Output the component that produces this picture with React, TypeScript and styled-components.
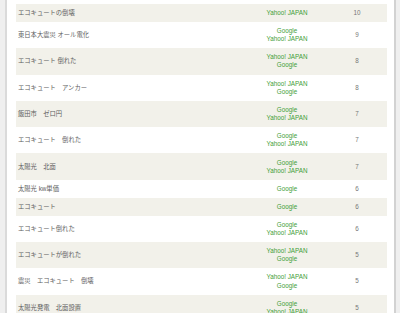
import React from "react";
import styled, { createGlobalStyle } from "styled-components";

const Global = createGlobalStyle`
  html, body { margin: 0; padding: 0; background: #fff; }
  body { overflow: hidden; }
`;

const Page = styled.div`
  display: flex;
  height: 313px;
  overflow: hidden;
  background-color: #fff;
  background-image: radial-gradient(#dcdcdc 0.6px, transparent 0.8px);
  background-size: 2px 2px;
  padding: 0 4px 0 5px;
  box-sizing: border-box;
`;

const Frame = styled.div`
  flex: 1;
  background: #fff;
  border-left: 2px solid #dadada;
  border-right: 2px solid #d2d2d2;
  padding: 4px 7px 0 9px;
  box-sizing: border-box;
`;

const Table = styled.table`
  width: 371px;
  border-collapse: collapse;
  table-layout: fixed;
  font-family: "Liberation Sans", "Noto Sans CJK JP", sans-serif;
  font-size: 6.3px;
  line-height: 8.1px;
`;

const Row = styled.tr<{ $shaded: boolean; $lines: number }>`
  background: ${(p) => (p.$shaded ? "#f2f1ea" : "#ffffff")};
  height: ${(p) => (p.$lines > 1 ? "26.3px" : "18px")};
`;

const KeywordCell = styled.td`
  width: 229px;
  padding: 0 0 0 2px;
  color: #606060;
  vertical-align: middle;
  white-space: pre;
`;

const EngineCell = styled.td`
  width: 80px;
  padding: 0;
  color: #3f9e38;
  text-align: center;
  vertical-align: middle;
`;

const CountCell = styled.td`
  padding: 0;
  color: #777;
  text-align: center;
  vertical-align: middle;
`;

const EngineLine = styled.div`
  display: block;
`;

type Item = { kw: string; engines: string[]; n: number };

const Y = "Yahoo! JAPAN";
const G = "Google";

const data: Item[] = [
  { kw: "エコキュートの倒壊", engines: [Y], n: 10 },
  { kw: "東日本大震災 オール電化", engines: [G, Y], n: 9 },
  { kw: "エコキュート 倒れた", engines: [Y, G], n: 8 },
  { kw: "エコキュート　アンカー", engines: [Y, G], n: 8 },
  { kw: "飯田市　ゼロ円", engines: [G, Y], n: 7 },
  { kw: "エコキュート　倒れた", engines: [G, Y], n: 7 },
  { kw: "太陽光　北面", engines: [G, Y], n: 7 },
  { kw: "太陽光 kw単価", engines: [G], n: 6 },
  { kw: "エコキュート", engines: [G], n: 6 },
  { kw: "エコキュート倒れた", engines: [G, Y], n: 6 },
  { kw: "エコキュートが倒れた", engines: [Y, G], n: 5 },
  { kw: "震災　エコキュート　倒壊", engines: [Y, G], n: 5 },
  { kw: "太陽光発電　北面設置", engines: [G, Y], n: 5 },
];

export default function App() {
  return (
    <>
      <Global />
      <Page>
        <Frame>
          <Table>
            <tbody>
              {data.map((d, i) => (
                <Row key={i} $shaded={i % 2 === 0} $lines={d.engines.length}>
                  <KeywordCell>{d.kw}</KeywordCell>
                  <EngineCell>
                    {d.engines.map((e, j) => (
                      <EngineLine key={j}>{e}</EngineLine>
                    ))}
                  </EngineCell>
                  <CountCell>{d.n}</CountCell>
                </Row>
              ))}
            </tbody>
          </Table>
        </Frame>
      </Page>
    </>
  );
}
